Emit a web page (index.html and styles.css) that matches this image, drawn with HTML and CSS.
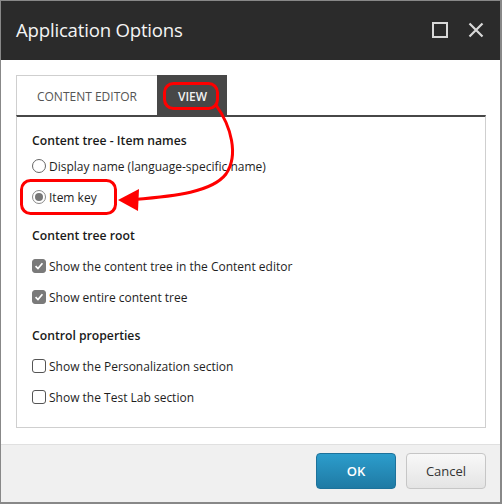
FILE: index.html
```html
<!DOCTYPE html>
<html>
<head>
<meta charset="utf-8">
<link rel="stylesheet" href="styles.css">
</head>
<body>
<div class="window">
  <div class="titlebar">
    <div class="title">Application Options</div>
    <div class="controls">
      <svg class="ico" width="16" height="16" viewBox="0 0 16 16"><rect x="1" y="1" width="14" height="14" fill="none" stroke="#d9d9d9" stroke-width="2"/></svg>
      <svg class="ico" width="16" height="16" viewBox="0 0 16 16"><path d="M1.5 1.5 L14.5 14.5 M14.5 1.5 L1.5 14.5" stroke="#d9d9d9" stroke-width="2.2" fill="none"/></svg>
    </div>
  </div>
  <div class="main">
    <div class="tabs">
      <div class="tab">CONTENT EDITOR</div>
      <div class="tab active">VIEW</div>
    </div>
    <div class="panel">
      <div class="section first">
        <div class="hdr">Content tree - Item names</div>
        <div class="row"><span class="radio"></span>Display name (language-specific name)</div>
        <div class="row"><span class="radio on"></span>Item key</div>
      </div>
      <div class="section">
        <div class="hdr">Content tree root</div>
        <div class="row"><span class="check on"><svg width="14" height="14" viewBox="0 0 14 14"><path d="M3 7.2 L5.8 10 L11 3.8" fill="none" stroke="#fff" stroke-width="2"/></svg></span>Show the content tree in the Content editor</div>
        <div class="row"><span class="check on"><svg width="14" height="14" viewBox="0 0 14 14"><path d="M3 7.2 L5.8 10 L11 3.8" fill="none" stroke="#fff" stroke-width="2"/></svg></span>Show entire content tree</div>
      </div>
      <div class="section">
        <div class="hdr">Control properties</div>
        <div class="row"><span class="check"></span>Show the Personalization section</div>
        <div class="row"><span class="check"></span>Show the Test Lab section</div>
      </div>
    </div>
  </div>
  <div class="footer">
    <button class="btn ok">OK</button>
    <button class="btn cancel">Cancel</button>
  </div>
  <svg class="annot" width="502" height="504" viewBox="0 0 502 504">
    <rect x="164.5" y="83.5" width="53" height="25" rx="9" fill="none" stroke="#ff0000" stroke-width="3"/>
    <rect x="21.5" y="180.5" width="94" height="33" rx="9" fill="none" stroke="#ff0000" stroke-width="3"/>
    <path d="M216 105 C231 126 239 155 226 174 C212 192 176 196 134 199.5" fill="none" stroke="#ff0000" stroke-width="3"/>
    <polygon points="118,200 139,189 138,211" fill="#ff0000"/>
  </svg>
</div>
</body>
</html>
```
FILE: styles.css
```css
* { box-sizing: border-box; }
html, body { margin: 0; padding: 0; }
body { font-family: "Open Sans", "Liberation Sans", sans-serif; color: #1e1e1e; }
.window {
  position: relative;
  width: 502px;
  height: 504px;
  border: 1px solid #888;
  border-right-width: 2px;
  border-bottom-width: 2px;
  display: flex;
  flex-direction: column;
  background: #fff;
}
.titlebar {
  height: 60px;
  background: #2b2b2b;
  display: flex;
  align-items: center;
  justify-content: space-between;
  padding: 0 16px 0 15px;
}
.title { color: #f4f4f4; font-size: 18.6px; letter-spacing: -0.2px; margin-top: -2px; }
.controls { display: flex; gap: 20px; margin-top: -2px; }
.ico { display: block; }
.main { flex: 1; padding: 15px 14px 16px 15px; }
.tabs { display: flex; height: 40px; }
.tab {
  width: 141px;
  display: flex;
  align-items: center;
  justify-content: center;
  font-size: 12px;
  color: #555;
  border-top: 1px solid #cfcfcf;
  border-left: 1px solid #cfcfcf;
  padding-top: 2px;
}
.tab.active {
  width: 70px;
  background: #474747;
  border-color: #474747;
  color: #f2f2f2;
  font-weight: 600;
}
.panel {
  border-top: 2px solid #474747;
  border-left: 1px solid #cfcfcf;
  border-right: 1px solid #cfcfcf;
  border-bottom: 1px solid #cfcfcf;
  padding: 14px 15px 14px 15px;
}
.section { margin-top: 14px; }
.section.first { margin-top: 0; }
.hdr { height: 20px; line-height: 20px; font-size: 12.2px; font-weight: 600; color: #1a1a1a; margin-bottom: 5px; }
.section.first .hdr { margin-bottom: 0; }
.row {
  height: 30px;
  display: flex;
  align-items: center;
  font-size: 12px;
  margin-bottom: 1px;
}
.radio {
  width: 14px; height: 14px;
  border: 1.3px solid #666;
  border-radius: 50%;
  margin-right: 3px;
  display: flex; align-items: center; justify-content: center;
  background: #fff;
}
.radio.on { border-color: #888; }
.radio.on::after {
  content: "";
  width: 8px; height: 8px;
  border-radius: 50%;
  background: #777;
}
.check {
  width: 14px; height: 14px;
  border: 1.3px solid #555;
  border-radius: 3px;
  margin-right: 3px;
  display: flex; align-items: center; justify-content: center;
}
.check.on { background: #7a7a7a; border-color: #7a7a7a; }
.check svg { display: block; }
.footer {
  height: 58px;
  background: #f0f0f0;
  border-top: 1px solid #e0e0e0;
  display: flex;
  justify-content: flex-end;
  align-items: flex-start;
  gap: 10px;
  padding: 8px 14px 0 0;
}
.btn {
  width: 80px; height: 36px;
  border-radius: 4px;
  font-family: "Open Sans", "Liberation Sans", sans-serif;
  font-size: 13px;
}
.btn.ok {
  background: linear-gradient(#2c9dcc, #1f7aa4);
  border: 1px solid #1d729b;
  color: #fff;
  font-weight: 600;
}
.btn.cancel {
  background: linear-gradient(#f8f8f8, #e4e4e4);
  border: 1px solid #c6c6c6;
  color: #333;
}
.annot { position: absolute; left: -1px; top: -1px; pointer-events: none; }
```
